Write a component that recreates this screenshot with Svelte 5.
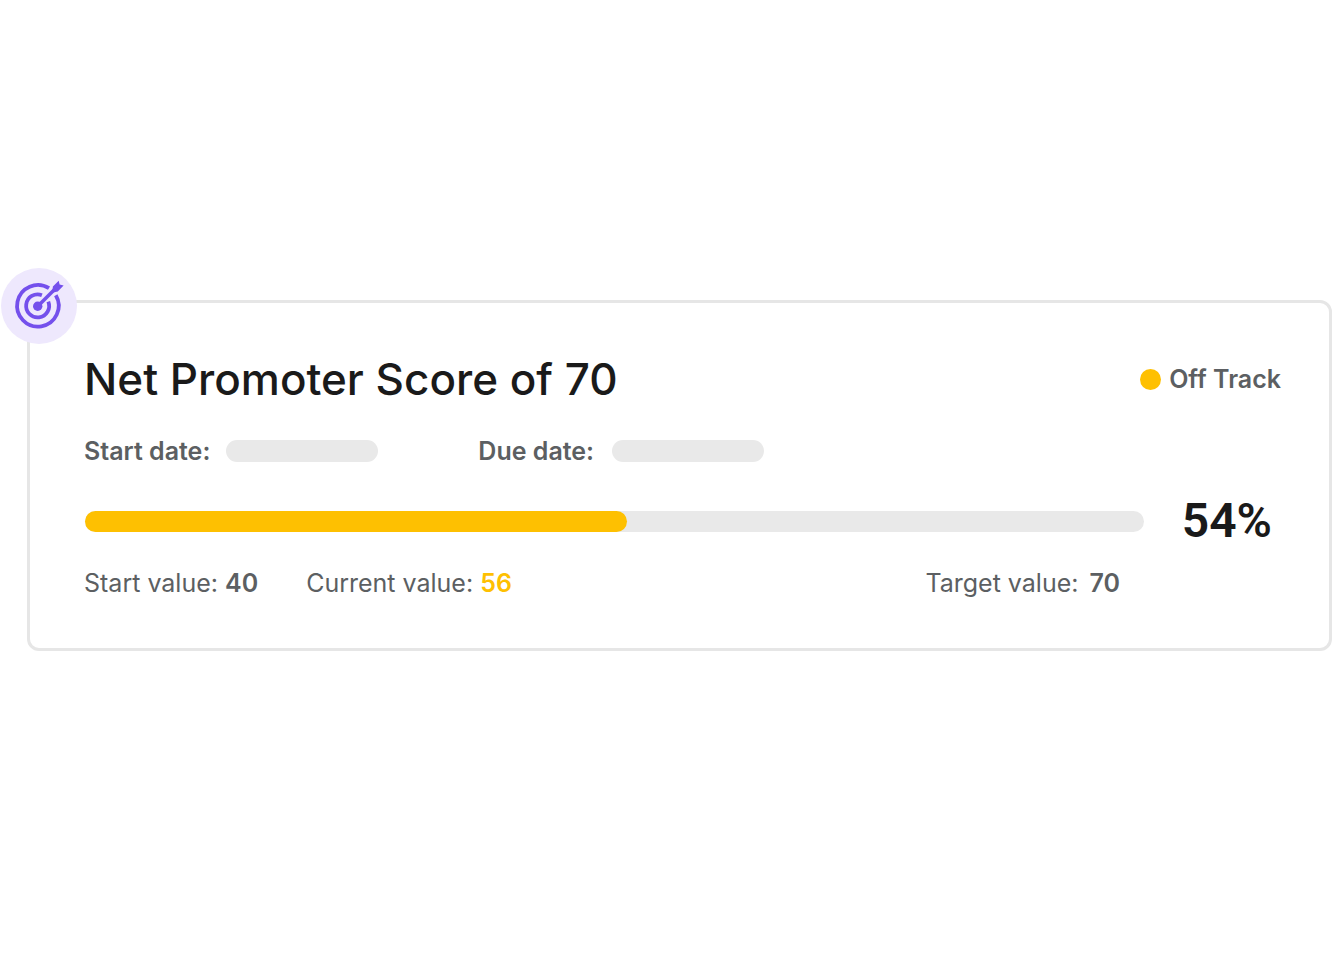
<script>
  const start = 40;
  const current = 56;
  const target = 70;
  const percent = 54;
  const fill = 51.2;
</script>

<main>
  <article class="card">
    <span class="badge" aria-hidden="true">
      <svg viewBox="0 0 76 76" width="76" height="76" fill="none" stroke="#7450ec" stroke-width="3.8">
        <path d="M48 20.200A20.800 20.800 0 1 0 54.800 27.200" />
        <path d="M40.900 27.200A11.500 11.500 0 1 0 47.300 33.600" />
        <path d="M36.500 38.500L54.500 20.500" stroke-width="3.600" />
        <circle cx="36.700" cy="38.300" r="4.700" fill="#7450ec" stroke="none" />
        <path d="M51.200 24.800L51.900 18.600L57.700 12.800L58.600 16.600L62.600 17.400L56.800 23.600Z" fill="#7450ec" stroke="none" />
      </svg>
    </span>
    <header>
      <h1>Net Promoter Score of {target}</h1>
      <span class="status"><i></i>Off Track</span>
    </header>
    <dl class="dates">
      <div><dt>Start date:</dt><dd></dd></div>
      <div><dt>Due date:</dt><dd></dd></div>
    </dl>
    <div class="progress">
      <div class="track" role="progressbar" aria-label="Progress" aria-valuenow={percent} aria-valuemin="0" aria-valuemax="100">
        <div class="fill" style="width: {fill}%"></div>
      </div>
      <strong>{percent}%</strong>
    </div>
    <div class="values">
      <span>Start value: <b>{start}</b></span>
      <span>Current value: <b class="current">{current}</b></span>
      <span class="target">Target value: <b>{target}</b></span>
    </div>
  </article>
</main>

<style>
  :global(body) {
    margin: 0;
    background: #fff;
  }
  main {
    box-sizing: border-box;
    min-height: 100vh;
    display: flex;
    align-items: center;
    padding: 0 0 12px 27px;
    font-family: Inter, sans-serif;
    font-size: 25px;
    line-height: 32px;
    color: #5c5f62;
  }
  .card {
    position: relative;
    flex: 1;
    box-sizing: border-box;
    padding: 48px 48px 49px 54px;
    border: 3px solid #e6e6e6;
    border-radius: 12px;
    background: #fff;
  }
  .badge {
    position: absolute;
    left: -29px;
    top: -35px;
    width: 76px;
    height: 76px;
    border-radius: 50%;
    background: #eee8fd;
  }
  svg {
    display: block;
  }
  header {
    display: flex;
    align-items: center;
    justify-content: space-between;
  }
  h1 {
    margin: 0;
    font-size: 44px;
    line-height: 56px;
    font-weight: 500;
    color: #1a1a1a;
  }
  .status {
    display: flex;
    align-items: center;
    gap: 8px;
    font-weight: 600;
  }
  .status i {
    width: 21px;
    height: 21px;
    border-radius: 50%;
    background: #fec001;
  }
  .dates {
    display: flex;
    gap: 100px;
    margin: 28px 0 0;
    font-weight: 600;
  }
  .dates div {
    display: flex;
    align-items: center;
    gap: 16px;
  }
  .dates div + div {
    gap: 18px;
  }
  dd {
    width: 152px;
    height: 22px;
    margin: 0;
    border-radius: 11px;
    background: #e9e9e9;
  }
  .progress {
    display: flex;
    align-items: center;
    gap: 38px;
    margin-top: 26px;
    padding: 0 9px 0 1px;
  }
  .track {
    flex: 1;
    height: 21px;
    border-radius: 11px;
    background: #e9e9e9;
  }
  .fill {
    height: 100%;
    border-radius: 11px;
    background: #fec001;
  }
  strong {
    font-family: Roboto, sans-serif;
    font-size: 48px;
    line-height: 56px;
    font-weight: 600;
    color: #1a1a1a;
  }
  .values {
    display: flex;
    gap: 48px;
    margin-top: 18px;
    padding-right: 161px;
  }
  .values b {
    font-weight: 600;
  }
  .values .current {
    color: #fec001;
  }
  .target {
    margin-left: auto;
  }
  .target b {
    margin-left: 4px;
  }
</style>
